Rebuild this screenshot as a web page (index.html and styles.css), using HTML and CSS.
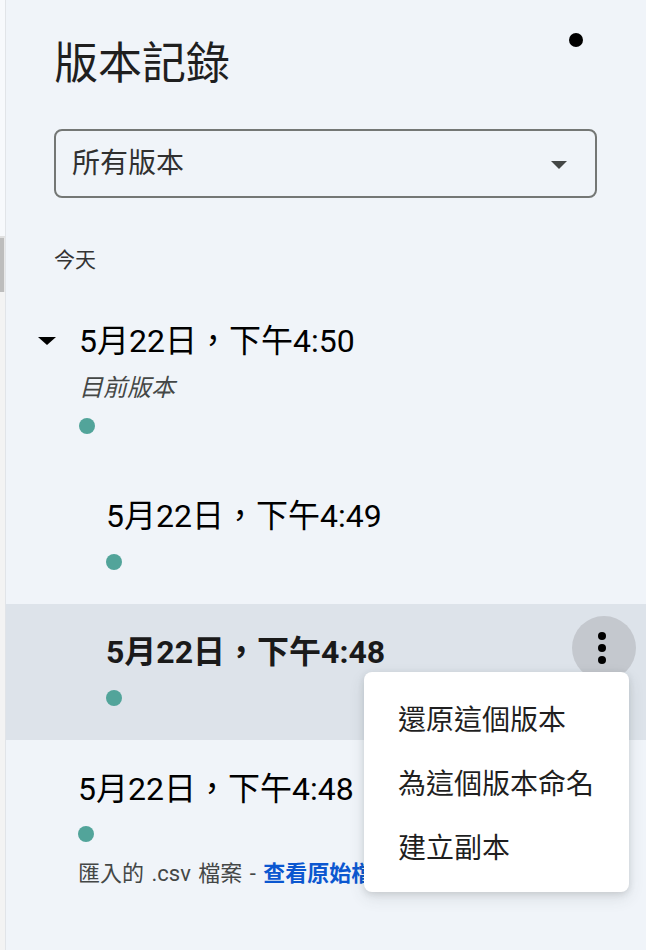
FILE: index.html
```html
<!DOCTYPE html>
<html lang="zh-Hant">
<head>
<meta charset="utf-8">
<title>版本記錄</title>
<link rel="stylesheet" href="styles.css">
</head>
<body>
<div class="page">
  <div class="backdrop">
    <div class="backdrop-top"></div>
    <div class="backdrop-block"></div>
    <div class="backdrop-rest"></div>
  </div>
  <aside class="panel">
    <header class="panel-header">
      <h1 class="panel-title">版本記錄</h1>
      <span class="status-dot"></span>
    </header>

    <div class="select">
      <span class="select-label">所有版本</span>
      <span class="select-arrow"></span>
    </div>

    <div class="section-label">今天</div>

    <div class="version version-top">
      <div class="version-head">
        <span class="caret"></span>
        <div class="version-body">
          <div class="version-time">5月22日，下午4:50</div>
          <div class="version-note">目前版本</div>
          <span class="author-dot author-dot-first"></span>
        </div>
      </div>
    </div>

    <div class="version version-nested">
      <div class="version-body">
        <div class="version-time">5月22日，下午4:49</div>
        <span class="author-dot"></span>
      </div>
    </div>

    <div class="version version-nested version-selected">
      <div class="version-body">
        <div class="version-time">5月22日，下午4:48</div>
        <span class="author-dot"></span>
      </div>
      <button class="kebab" type="button" aria-label="更多動作">
        <span></span><span></span><span></span>
      </button>
      <ul class="menu">
        <li class="menu-item">還原這個版本</li>
        <li class="menu-item">為這個版本命名</li>
        <li class="menu-item">建立副本</li>
      </ul>
    </div>

    <div class="version version-plain">
      <div class="version-body">
        <div class="version-time">5月22日，下午4:48</div>
        <span class="author-dot author-dot-last"></span>
        <div class="version-import">匯入的 .csv 檔案 - <a class="version-link" href="#">查看原始檔案</a></div>
      </div>
    </div>
  </aside>
</div>
</body>
</html>
```

FILE: styles.css
```css
* {
  box-sizing: border-box;
}

html, body {
  margin: 0;
  padding: 0;
  height: 100%;
}

body {
  font-family: Roboto, "Noto Sans CJK TC", "Noto Sans", sans-serif;
  color: #1f1f1f;
  background: #f0f4f9;
  overflow: hidden;
}

.page {
  display: flex;
  height: 950px;
}

.backdrop {
  width: 5px;
  display: flex;
  flex-direction: column;
  background: #f8f9fb;
}

.backdrop-top {
  height: 236px;
  background: #f7f9fc;
}

.backdrop-block {
  height: 56px;
  background: #bdbdbd;
  border-top: 2px solid #e0e0e0;
  border-right: 1px solid #e8e8e8;
}

.backdrop-rest {
  flex: 1;
  background: #f3f3f3;
}

.panel {
  flex: 1;
  position: relative;
  background: #f0f4f9;
  border-left: 1px solid #e1e4e8;
  overflow: hidden;
}

.panel-header {
  display: flex;
  justify-content: space-between;
  align-items: flex-start;
  padding: 33px 63px 0 48px;
}

.panel-title {
  margin: 5px 0 0;
  font-size: 44px;
  line-height: 52px;
  font-weight: 400;
  color: #1f1f1f;
}

.status-dot {
  width: 14px;
  height: 14px;
  border-radius: 50%;
  background: #000;
}

.select {
  margin: 39px 48px 0 48px;
  height: 69px;
  width: 543px;
  border: 2px solid #747775;
  border-radius: 8px;
  display: flex;
  align-items: center;
  justify-content: space-between;
  padding: 0 28px 0 16px;
}

.select-label {
  font-size: 28px;
  line-height: 36px;
  color: #303030;
}

.select-arrow {
  width: 0;
  height: 0;
  border-left: 8px solid transparent;
  border-right: 8px solid transparent;
  border-top: 8px solid #444746;
  margin-top: 2px;
}

.section-label {
  margin: 48px 0 0 48px;
  font-size: 21px;
  line-height: 28px;
  color: #333;
}

.version {
  position: relative;
  display: flex;
  justify-content: space-between;
  align-items: flex-start;
}

.version-top {
  margin-top: 19px;
  padding: 28px 0 34px 32px;
}

.version-head {
  display: flex;
  align-items: flex-start;
  gap: 23px;
}

.caret {
  width: 0;
  height: 0;
  margin-top: 16px;
  border-left: 9px solid transparent;
  border-right: 9px solid transparent;
  border-top: 8px solid #000;
}

.version-nested {
  padding: 28px 0 34px 100px;
}

.version-plain {
  padding: 29px 0 20px 72px;
}

.version-selected {
  background: #dde3ea;
}

.version-body {
  display: flex;
  flex-direction: column;
  align-items: flex-start;
}

.version-time {
  font-size: 32px;
  line-height: 40px;
  font-weight: 400;
  color: #000;
  white-space: nowrap;
}

.version-selected .version-time {
  font-weight: 700;
  color: #1a1a1a;
}

.version-note {
  margin-top: 11px;
  font-size: 24px;
  line-height: 32px;
  font-style: italic;
  color: #444746;
}

.author-dot {
  display: block;
  width: 16px;
  height: 16px;
  border-radius: 50%;
  background: #52a49a;
  margin-top: 18px;
}

.author-dot-first {
  margin-top: 14px;
}

.author-dot-last {
  margin-top: 17px;
}

.version-import {
  margin-top: 18px;
  font-size: 22px;
  line-height: 28px;
  color: #444746;
  white-space: nowrap;
  word-spacing: 2px;
}

.version-link {
  color: #0b57d0;
  font-weight: 700;
  text-decoration: none;
}

.kebab {
  width: 64px;
  height: 64px;
  margin: -16px 10px 0 0;
  border: none;
  padding: 0;
  border-radius: 50%;
  background: #c4c8ce;
  display: flex;
  flex-direction: column;
  align-items: center;
  justify-content: center;
  gap: 4px;
  flex-shrink: 0;
}

.kebab span {
  display: block;
  width: 8px;
  height: 8px;
  border-radius: 50%;
  background: #000;
  margin-left: -4px;
}

.menu {
  position: absolute;
  top: 68px;
  right: 17px;
  width: 265px;
  margin: 0;
  padding: 14px 0;
  list-style: none;
  background: #fff;
  border-radius: 8px;
  box-shadow: 0 2px 6px rgba(60, 64, 67, 0.15), 0 6px 16px rgba(60, 64, 67, 0.12);
  z-index: 5;
}

.menu-item {
  height: 64px;
  display: flex;
  align-items: center;
  padding-left: 34px;
  font-size: 28px;
  color: #1f1f1f;
  white-space: nowrap;
}
```
